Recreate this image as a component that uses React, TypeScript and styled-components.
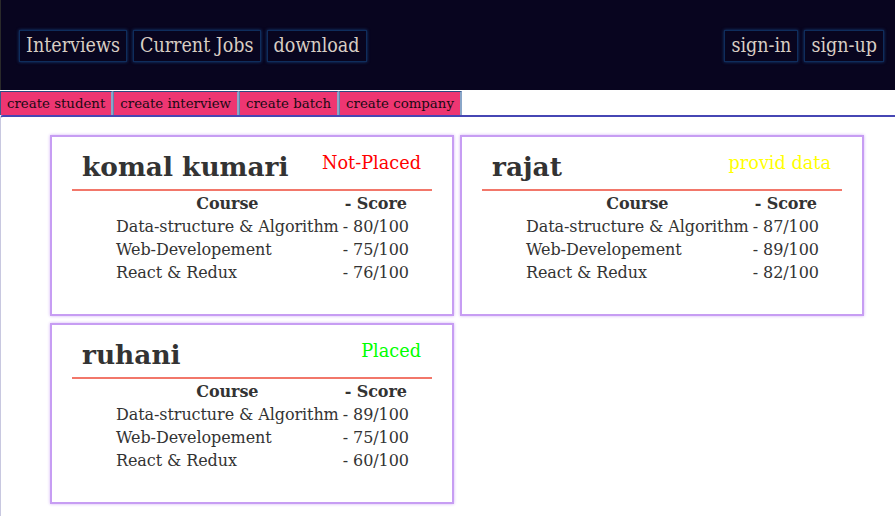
import React from "react";
import styled, { createGlobalStyle } from "styled-components";

const Global = createGlobalStyle`
  html, body { margin: 0; padding: 0; background: #fff; }
  body { font-family: "DejaVu Serif", serif; }
`;

const Page = styled.div`
  width: 895px;
  min-height: 516px;
  display: flex;
  flex-direction: column;
`;

const Header = styled.header`
  height: 90px;
  background: #08051f;
  border-left: 1px solid #2a2a2a;
  box-sizing: border-box;
  display: flex;
  align-items: center;
  justify-content: space-between;
  padding: 2px 11px 0 18px;
`;

const NavGroup = styled.nav`
  display: flex;
  gap: 6px;
`;

const NavButton = styled.a`
  font-family: "DejaVu Serif Condensed", "DejaVu Serif", serif;
  font-stretch: condensed;
  font-size: 19.5px;
  line-height: 22px;
  color: #d8cec4;
  padding: 4px 6px;
  border: 1px solid #0f2d5c;
  box-shadow: 0 0 3px #17407c;
  text-decoration: none;
`;

const Tabs = styled.div`
  display: flex;
  height: 24px;
  margin-top: 1px;
`;

const Tab = styled.button`
  font-family: "DejaVu Serif", serif;
  font-size: 13.333px;
  color: #1a0a14;
  background: #ee3672;
  border: none;
  border-left: 1px solid #5f82ad;
  border-right: 2px solid #8aa6c8;
  border-top: 1px solid #2b4a80;
  padding: 0 6px;
  margin: 0;
  height: 24px;
  line-height: 22px;
  &:first-child { border-left: 1px solid #3b5a90; }
`;

const Content = styled.main`
  flex: 1;
  border-top: 2px solid #4646b4;
  border-left: 1px solid #c8c8e0;
  border-top-left-radius: 3px;
  padding: 18px 0 10px 49px;
`;

const Grid = styled.div`
  display: grid;
  grid-template-columns: 404px 404px;
  column-gap: 6px;
  row-gap: 7px;
`;

const Card = styled.section`
  box-sizing: border-box;
  height: 181px;
  border: 2px solid #c79df3;
  box-shadow: 0 0 3px #d2b2f6;
  padding-top: 14px;
`;

const CardHead = styled.div`
  display: flex;
  justify-content: space-between;
  align-items: flex-start;
  padding: 0 31px 0 30px;
`;

const Name = styled.h2`
  margin: 0;
  font-family: "DejaVu Serif", serif;
  font-size: 26.4px;
  font-weight: bold;
  color: #333;
  line-height: 32px;
`;

const Status = styled.span<{ $color: string }>`
  font-family: "DejaVu Serif", serif;
  font-size: 17.7px;
  line-height: 22px;
  margin-top: 1px;
  color: ${(p) => p.$color};
`;

const Rule = styled.hr`
  margin: 6px 20px 0;
  border: none;
  height: 2px;
  background: #f2776a;
`;

const Table = styled.table`
  margin-left: 61px;
  font-family: "DejaVu Serif", serif;
  font-size: 16px;
  letter-spacing: -0.08px;
  color: #333;
  th { font-weight: bold; }
  td, th { padding: 1px; }
`;

type Student = {
  name: string;
  status: string;
  color: string;
  scores: [string, string][];
};

const students: Student[] = [
  {
    name: "komal kumari",
    status: "Not-Placed",
    color: "#ff0000",
    scores: [
      ["Data-structure & Algorithm", "80/100"],
      ["Web-Developement", "75/100"],
      ["React & Redux", "76/100"],
    ],
  },
  {
    name: "rajat",
    status: "provid data",
    color: "#ffff00",
    scores: [
      ["Data-structure & Algorithm", "87/100"],
      ["Web-Developement", "89/100"],
      ["React & Redux", "82/100"],
    ],
  },
  {
    name: "ruhani",
    status: "Placed",
    color: "#00ff00",
    scores: [
      ["Data-structure & Algorithm", "89/100"],
      ["Web-Developement", "75/100"],
      ["React & Redux", "60/100"],
    ],
  },
];

export default function App() {
  return (
    <Page>
      <Global />
      <Header>
        <NavGroup>
          <NavButton>Interviews</NavButton>
          <NavButton>Current Jobs</NavButton>
          <NavButton>download</NavButton>
        </NavGroup>
        <NavGroup>
          <NavButton>sign-in</NavButton>
          <NavButton>sign-up</NavButton>
        </NavGroup>
      </Header>
      <Tabs>
        <Tab>create student</Tab>
        <Tab>create interview</Tab>
        <Tab>create batch</Tab>
        <Tab>create company</Tab>
      </Tabs>
      <Content>
        <Grid>
          {students.map((s) => (
            <Card key={s.name}>
              <CardHead>
                <Name>{s.name}</Name>
                <Status $color={s.color}>{s.status}</Status>
              </CardHead>
              <Rule />
              <Table>
                <thead>
                  <tr>
                    <th>Course</th>
                    <th>- Score</th>
                  </tr>
                </thead>
                <tbody>
                  {s.scores.map(([c, v]) => (
                    <tr key={c}>
                      <td>{c}</td>
                      <td>- {v}</td>
                    </tr>
                  ))}
                </tbody>
              </Table>
            </Card>
          ))}
        </Grid>
      </Content>
    </Page>
  );
}
